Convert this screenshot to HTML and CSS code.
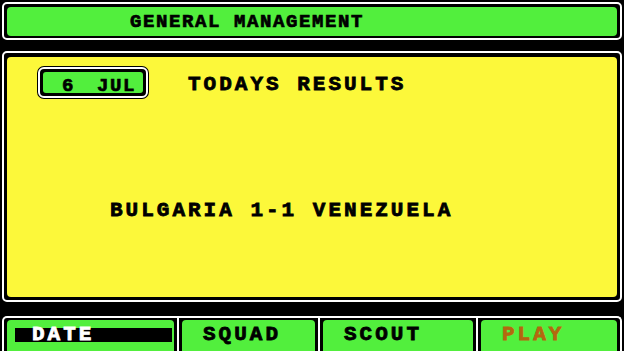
FILE: index.html
```html
<!DOCTYPE html>
<html lang="en">

<head>
    <meta charset="UTF-8">
    <meta name="viewport" content="width=device-width, initial-scale=1.0">
    <title>General Management</title>
    <link rel="stylesheet" href="styles.css">
</head>

<body>
    <div class="screen">
        <!-- Title bar -->
        <header class="frame title-frame">
            <div class="title">GENERAL MANAGEMENT</div>
        </header>

        <!-- Results panel -->
        <main class="frame main-frame">
            <div class="panel">
                <div class="panel-row">
                    <div class="date-box">
                        <div class="date-inner">6 JUL</div>
                    </div>
                    <h1 class="heading">TODAYS RESULTS</h1>
                </div>
                <p class="result">BULGARIA 1-1 VENEZUELA</p>
            </div>
        </main>

        <!-- Bottom menu -->
        <nav class="tabs">
            <div class="tab">
                <div class="tab-inner"><span class="label active">DATE</span></div>
            </div>
            <div class="tab">
                <div class="tab-inner"><span class="label">SQUAD</span></div>
            </div>
            <div class="tab">
                <div class="tab-inner"><span class="label">SCOUT</span></div>
            </div>
            <div class="tab">
                <div class="tab-inner"><span class="label play">PLAY</span></div>
            </div>
        </nav>
    </div>
</body>

</html>
```

FILE: styles.css
```css
body {
    margin: 0;
    padding: 0;
    background-color: #000;
    width: 624px;
    height: 351px;
    overflow: hidden;
    font-family: 'Liberation Mono', 'Courier New', monospace;
    font-weight: bold;
    color: #000;
}

.screen {
    padding: 2px 2px 0;
}

/* white outlined frame with black gap inside */
.frame {
    border: 2px solid #fff;
    border-radius: 5px;
    background-color: #000;
}

.title-frame {
    padding: 3px 3px 2px;
    margin-bottom: 11px;
}

.title {
    height: 29px;
    box-sizing: border-box;
    padding: 2px 0 0 123px;
    line-height: 27px;
    font-size: 19px;
    letter-spacing: 1.6px;
    background-color: #52ef3d;
    border-radius: 4px;
    -webkit-text-stroke: 0.7px #000;
}

.main-frame {
    padding: 4px 3px 3px;
    margin-bottom: 14px;
}

.panel {
    height: 240px;
    background-color: #fcf83a;
    border-radius: 4px;
    overflow: hidden;
}

.panel-row {
    display: flex;
    align-items: flex-start;
    padding: 10px 0 0 31px;
}

.date-box {
    width: 110px;
    box-sizing: border-box;
    border: 2px solid #fff;
    border-radius: 6px;
    padding: 3px;
    background-color: #000;
    box-shadow: 0 0 0 1px #000;
}

.date-inner {
    height: 21px;
    box-sizing: border-box;
    padding: 7px 0 0 19px;
    line-height: 15px;
    font-size: 19px;
    letter-spacing: 1.6px;
    word-spacing: 9px;
    background-color: #52ef3d;
    border-radius: 3px;
    -webkit-text-stroke: 0.7px #000;
}

.heading,
.result {
    margin: 0;
    font-size: 21px;
    line-height: 21px;
    letter-spacing: 3px;
    font-weight: bold;
    -webkit-text-stroke: 0.8px #000;
}

.heading {
    margin: 7px 0 0 40px;
}

.result {
    margin: 102px 0 0 103px;
}

/* bottom menu */
.tabs {
    display: grid;
    grid-template-columns: 173px 141px 158px 1fr;
    border: 2px solid #fff;
    border-bottom: none;
    border-radius: 5px 5px 0 0;
    height: 33px;
}

.tab {
    padding: 2px 3px 0;
}

.tab + .tab {
    border-left: 2px solid #fff;
}

.tab-inner {
    height: 31px;
    box-sizing: border-box;
    padding-top: 8px;
    background-color: #52ef3d;
    border-radius: 4px 4px 0 0;
}

.label {
    display: block;
    height: 14px;
    line-height: 14px;
    padding-left: 21px;
    font-size: 21px;
    letter-spacing: 3px;
    -webkit-text-stroke: 0.8px currentColor;
}

.label.active {
    margin: 0 2px 0 8px;
    padding-left: 17px;
    background-color: #000;
    color: #fff;
}

.label.play {
    color: #b5670f;
}
```
